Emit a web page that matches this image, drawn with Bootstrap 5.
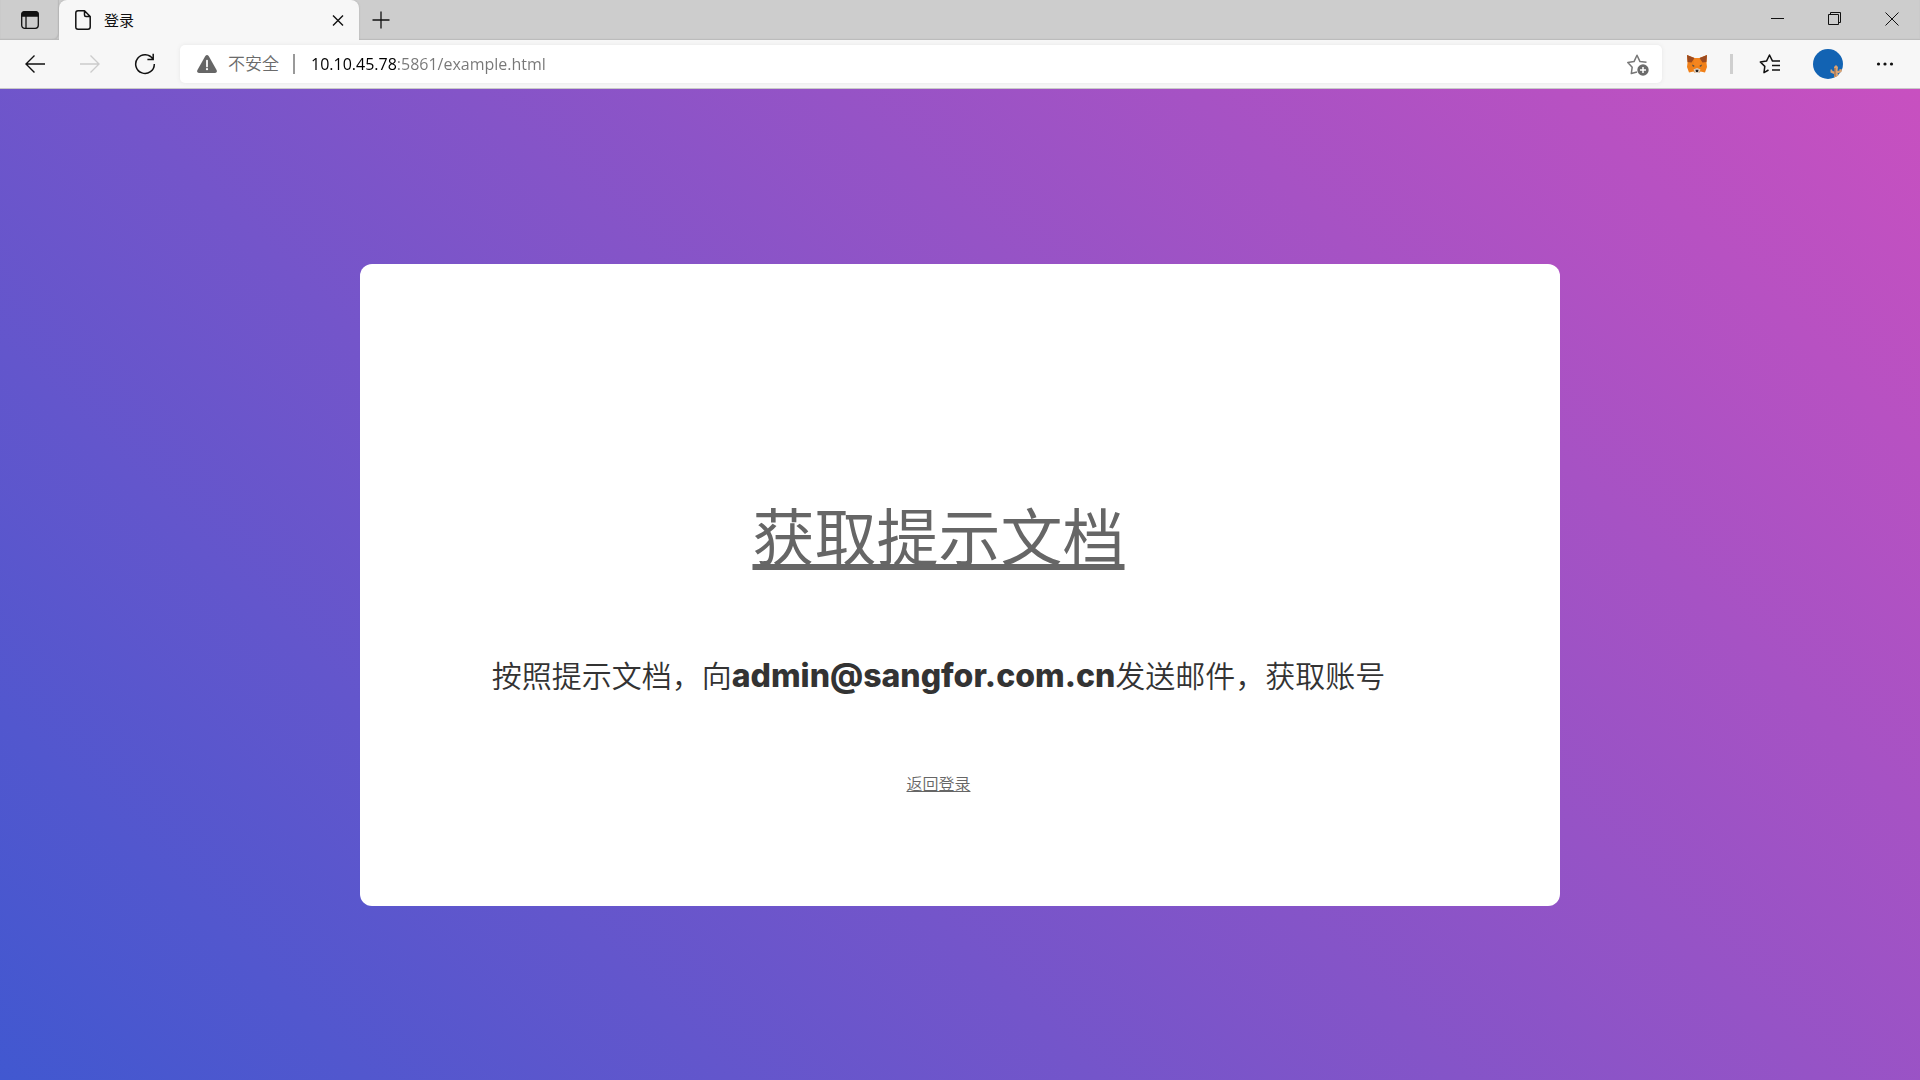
<!DOCTYPE html>
<html lang="zh-CN">
<head>
<meta charset="utf-8">
<meta name="viewport" content="width=device-width, initial-scale=1">
<title>登录</title>
<link href="https://cdn.jsdelivr.net/npm/bootstrap@5.3.0/dist/css/bootstrap.min.css" rel="stylesheet">
<style>
  body { font-family: "Open Sans", "Noto Sans CJK SC", sans-serif; color: #333; }
  svg { display: block; flex: none; }
  .icon-btn { border: 0; background: none; padding: 0; color: #111; display: flex; align-items: center; justify-content: center; flex: none; }
  .icon-btn:disabled { color: #ccc; }

  .tab-strip { height: 40px; background: #cdcdcd; box-shadow: inset 0 -1px 1px #bbb; }
  .tabs-menu { width: 59px; border-bottom-right-radius: 6px; box-shadow: inset -1px -1px 1px #bbb; }
  .page-tab { width: 300px; padding: 0 13px 0 15px; background: #f7f7f7; border-radius: 8px 8px 0 0; box-shadow: 0 0 2px #aaa; clip-path: inset(0 -2px 0 -2px); font-size: 15px; line-height: 20px; color: #111; }
  .tab-title { margin-left: 12px; }
  .new-tab { width: 43px; }
  .window-btn { width: 57px; }

  .tool-bar { height: 49px; background: #f7f7f7; border-bottom: 1px solid #c8c8c8; padding: 0 7px; }
  .nav-btn { width: 55px; height: 40px; }
  .tool-btn { width: 58px; height: 40px; }
  .menu-btn { width: 56px; height: 40px; }
  .address-bar { height: 38px; margin: 0 6px 0 8px; padding: 0 12px 0 17px; background: #fff; border-radius: 5px; box-shadow: 0 0 4px #e6e6e6; font-size: 16px; line-height: 24px; }
  .security-note { color: #6b6b6b; font-size: 17px; font-weight: 350; margin: 0 14px 0 11px; }
  .bar-rule { width: 2px; height: 20px; background: #999; flex: none; }
  .tool-rule { width: 3px; height: 20px; background: #cfcfcf; flex: none; }
  /* host in black, port and path in grey */
  .address-input { border: 0; outline: 0; padding: 0; min-width: 0; color: #777; -webkit-text-fill-color: transparent;
    background: linear-gradient(90deg, #000 86px, #777 86px); -webkit-background-clip: text; background-clip: text; }

  .login-stage { background: linear-gradient(-135deg, #c850c0, #4158d0); }
  .hint-panel { width: 100%; max-width: 1200px; background: #fff; border-radius: 12px; padding: 225px 162px 110px 119px; }
  .hint-panel a { color: #666; }
  .doc-title { font-size: 62px; line-height: 96px; margin: 0 0 68px; font-weight: 400; }
  .doc-title a { text-decoration-thickness: 6px; text-underline-offset: 3px; text-decoration-skip-ink: none; }
  .doc-text { font-size: 30px; line-height: 45px; margin: 0 0 74px; font-weight: 350; }
  .doc-text strong { font-family: Inter, sans-serif; font-size: 32px; font-weight: 800; line-height: 1; }
  .back-link { font-size: 16px; line-height: 24px; margin: 0; font-weight: 350; }
  .back-link a { text-decoration-skip-ink: none; }
</style>
<script defer src="https://cdn.jsdelivr.net/npm/bootstrap@5.3.0/dist/js/bootstrap.bundle.min.js"></script>
</head>
<body class="min-vh-100 d-flex flex-column">
<header>
  <div class="tab-strip d-flex">
    <button class="icon-btn tabs-menu" type="button" aria-label="标签页">
      <svg width="18" height="18" viewBox="0 0 18 18" fill="none" stroke="currentColor" stroke-width="1.3"><rect x=".7" y=".7" width="16.6" height="16.6" rx="3"/><path d="M1 5V3Q1 1 3 1H15Q17 1 17 3V5Z" fill="currentColor"/><path d="M5 5V17"/></svg>
    </button>
    <div class="page-tab d-flex align-items-center">
      <svg width="18" height="20" viewBox="0 0 18 20" fill="none" stroke="currentColor" stroke-width="1.5" stroke-linejoin="round"><path d="M4 .8H10.5L16.2 6.5V17Q16.2 19.2 14 19.2H4Q1.8 19.2 1.8 17V3Q1.8 .8 4 .8ZM10.5 .8V5Q10.5 6.5 12 6.5H16.2"/></svg>
      <span class="tab-title flex-fill">登录</span>
      <button class="icon-btn" type="button" aria-label="关闭标签页">
        <svg width="16" height="16" viewBox="0 0 16 16" fill="none" stroke="currentColor" stroke-width="1.4"><path d="M3 3.5L13 13.5M13 3.5L3 13.5"/></svg>
      </button>
    </div>
    <button class="icon-btn new-tab" type="button" aria-label="新建标签页">
      <svg width="18" height="18" viewBox="0 0 18 18" fill="none" stroke="currentColor" stroke-width="1.3"><path d="M9 .5V17.5M.5 9H17.5"/></svg>
    </button>
    <div class="d-flex ms-auto">
      <button class="icon-btn window-btn" type="button" aria-label="最小化"><svg width="14" height="14" viewBox="0 0 14 14" stroke="currentColor"><path d="M0 5.5H13"/></svg></button>
      <button class="icon-btn window-btn" type="button" aria-label="还原"><svg width="14" height="16" viewBox="0 0 14 16" fill="none" stroke="currentColor"><path d="M.5 2.5H10.5V12.5H.5ZM2.5 2.5V.5H12.5V10.5H10.5"/></svg></button>
      <button class="icon-btn window-btn" type="button" aria-label="关闭"><svg width="14" height="16" viewBox="0 0 14 16" fill="none" stroke="currentColor"><path d="M.5 .5L13.5 13.5M13.5 .5L.5 13.5"/></svg></button>
    </div>
  </div>
  <div class="tool-bar d-flex align-items-center">
    <button class="icon-btn nav-btn" type="button" aria-label="后退"><svg width="22" height="20" viewBox="0 0 22 20" fill="none" stroke="currentColor" stroke-width="1.4"><path d="M21 10H2M10.5 1.5L2 10L10.5 18.5"/></svg></button>
    <button class="icon-btn nav-btn" type="button" aria-label="前进" disabled><svg width="22" height="20" viewBox="0 0 22 20" fill="none" stroke="currentColor" stroke-width="1.4"><path d="M1 10H20M11.5 1.5L20 10L11.5 18.5"/></svg></button>
    <button class="icon-btn nav-btn" type="button" aria-label="刷新"><svg width="22" height="22" viewBox="0 0 22 22" fill="none" stroke="currentColor" stroke-width="1.5"><path d="M18.9 6.2A9.3 9.3 0 1 0 20.3 11M19.2 .8V6.6H13.4"/></svg></button>
    <form class="address-bar d-flex align-items-center flex-fill">
      <svg width="20" height="18" viewBox="0 0 20 18"><path d="M8.3 1Q10-.9 11.7 1L19.7 15.3Q20.3 17.8 18 18H2Q-.3 17.8 .3 15.3Z" fill="#666"/><path d="M10 5.6V11.4" stroke="#fff" stroke-width="1.8" stroke-linecap="round"/><circle cx="10" cy="14.2" r="1.1" fill="#fff"/></svg>
      <label class="security-note" for="address">不安全</label>
      <span class="bar-rule me-3"></span>
      <input class="address-input flex-fill" id="address" type="text" value="10.10.45.78:5861/example.html">
      <button class="icon-btn" type="button" aria-label="收藏此页">
        <svg width="24" height="24" viewBox="0 0 24 24" fill="none" stroke="#777" stroke-width="1.5" stroke-linejoin="round"><path d="M11 20L5.3 21.5L6.2 15.2L1.8 10.5L8 9.6L11 3.2L14 9.6L20.5 10.3"/><circle cx="17" cy="18" r="5.7" fill="#6b6b6b" stroke="none"/><path d="M17 15V21M14 18H20" stroke="#fff"/></svg>
      </button>
    </form>
    <button class="icon-btn tool-btn" type="button" aria-label="扩展">
      <svg width="22" height="20" viewBox="0 0 22 20"><path d="M1 1L8.5 4H13.5L21 1L20.5 9L21 13L19 18.5L14.5 17.5L13 19H9L7.5 17.5L3 18.5L1 13L1.5 9Z" fill="#f08019"/><path d="M1 1L8.5 4L5.5 8.5L1.6 8ZM21 1L13.5 4L16.5 8.5L20.4 8Z" fill="#9b4a20"/><path d="M8.5 4H13.5L14.5 12H7.5Z" fill="#f5851f"/><path d="M7.5 15.5L11 14L14.5 15.5L13 19H9Z" fill="#ddd0c4"/><path d="M9.5 15.7H12.5L12 18H10Z" fill="#27221f"/><path d="M6 10.5L8.8 12L7 12.7ZM16 10.5L13.2 12L15 12.7Z" fill="#304453"/></svg>
    </button>
    <span class="tool-rule ms-1"></span>
    <button class="icon-btn tool-btn ms-2" type="button" aria-label="收藏夹">
      <svg width="22" height="22" viewBox="0 0 22 22" fill="none" stroke="currentColor" stroke-width="1.5" stroke-linejoin="round"><path d="M9.5 17L5 19.6L5.8 13.4L1.3 9L7.5 8.1L10.5 2L13.5 8.1H21M13 12.5H21M13 17H21"/></svg>
    </button>
    <button class="icon-btn tool-btn" type="button" aria-label="个人资料">
      <svg width="30" height="30" viewBox="0 0 30 30"><circle cx="15" cy="15" r="15" fill="#1263b3"/><path d="M21 28.5V25L17.5 23.5V20.5L19 20.5L19.5 22L21.5 22.5L21 18L23 16L25 18L24.5 22L26.5 21.5V20L29 20.5L28.5 23L24.5 24.5L25.5 26.5Q23.5 28 21 28.5Z" fill="#d9a273"/><path d="M22 19V27.5" stroke="#714933" stroke-width=".7"/></svg>
    </button>
    <button class="icon-btn menu-btn" type="button" aria-label="设置及其他">
      <svg width="18" height="6" viewBox="0 0 18 6" fill="currentColor"><circle cx="2.5" cy="3" r="1.6"/><circle cx="9" cy="3" r="1.6"/><circle cx="15.5" cy="3" r="1.6"/></svg>
    </button>
  </div>
</header>
<main class="login-stage flex-fill d-flex align-items-center justify-content-center">
  <section class="hint-panel text-center">
    <h1 class="doc-title"><a href="#doc">获取提示文档</a></h1>
    <p class="doc-text">按照提示文档，向<strong>admin@sangfor.com.cn</strong>发送邮件，获取账号</p>
    <p class="back-link"><a href="#login">返回登录</a></p>
  </section>
</main>
</body>
</html>
